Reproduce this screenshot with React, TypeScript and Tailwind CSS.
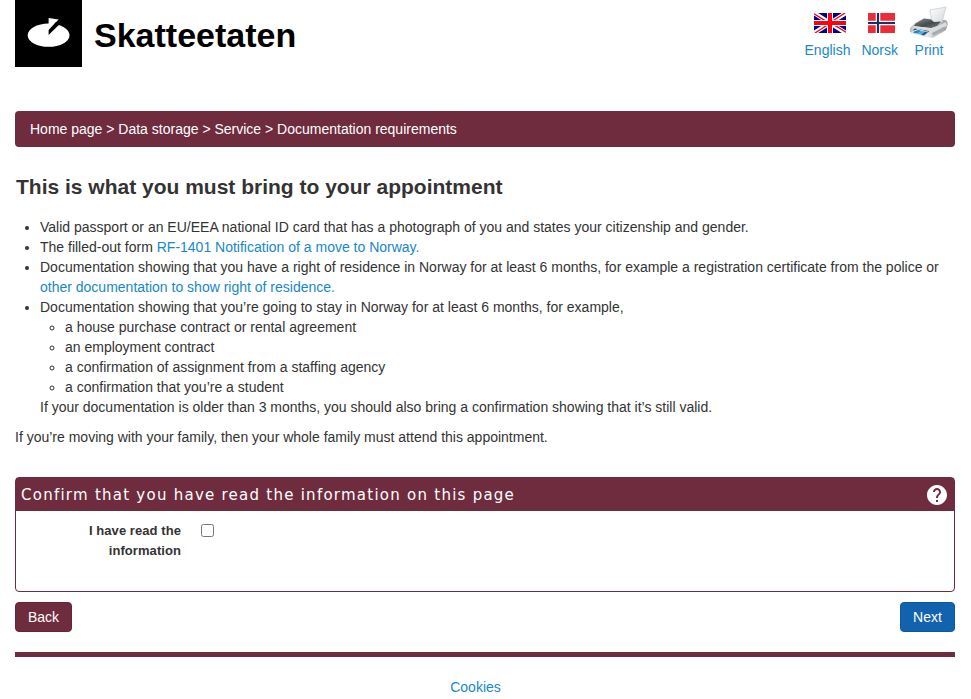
import { useState, type ReactNode } from "react";

const breadcrumbs = ["Home page", "Data storage", "Service", "Documentation requirements"];

const stayExamples = [
  "a house purchase contract or rental agreement",
  "an employment contract",
  "a confirmation of assignment from a staffing agency",
  "a confirmation that you’re a student",
];

function Link({ children }: { children: ReactNode }) {
  return (
    <a href="#" className="text-[#1788c8] hover:underline">
      {children}
    </a>
  );
}

function Logo() {
  return (
    <div className="flex">
      <svg width="67" height="67" viewBox="0 0 67 67">
        <rect width="67" height="67" fill="#000" />
        <ellipse cx="33.6" cy="35.2" rx="20.9" ry="11.6" fill="#fff" />
        <path d="M33.6 18L43.6 19.4L33.6 30Z" fill="#fff" />
        <path d="M33.6 35V30L41 22L43.8 25Z" fill="#000" />
      </svg>
      <span className="ml-3 mt-[9px] text-[34px] leading-[52px] font-bold text-black">Skatteetaten</span>
    </div>
  );
}

function EnglishFlag() {
  return (
    <svg className="ml-[5px]" width="32" height="20" viewBox="0 0 32 20">
      <rect width="32" height="20" fill="#000080" />
      <path d="M0 0L32 20M32 0L0 20" stroke="#fff" strokeWidth="4.4" />
      <path d="M0 0.7L14 9.4M32 19.3L18 10.6M31 0L17 9M1 20L15 11" stroke="#f00010" strokeWidth="1.3" />
      <path d="M16 0V20M0 10H32" stroke="#fff" strokeWidth="6" />
      <path d="M16 0V20M0 10H32" stroke="#ff0010" strokeWidth="4" />
    </svg>
  );
}

function NorwegianFlag() {
  return (
    <svg className="ml-[3px]" width="27" height="20" viewBox="0 0 27 20">
      <rect width="27" height="20" fill="#ee2c38" />
      <path d="M10 0V20M0 10H27" stroke="#fff" strokeWidth="4.6" />
      <path d="M10 0V20M0 10H27" stroke="#123564" strokeWidth="2.2" />
    </svg>
  );
}

function PrinterIcon() {
  return (
    <svg width="40" height="34" viewBox="0 0 40 34">
      <defs>
        <linearGradient id="paper" x1="0" y1="0" x2="1" y2="1">
          <stop offset="0" stopColor="#fff" />
          <stop offset="1" stopColor="#d3d6da" />
        </linearGradient>
        <linearGradient id="lid" x1="0" y1="0" x2="1" y2="1">
          <stop offset="0" stopColor="#8b9092" />
          <stop offset="0.55" stopColor="#454b4d" />
          <stop offset="1" stopColor="#777c7d" />
        </linearGradient>
        <linearGradient id="body" x1="0" y1="0" x2="1" y2="0">
          <stop offset="0" stopColor="#b9bdbf" />
          <stop offset="0.45" stopColor="#eceeee" />
          <stop offset="1" stopColor="#95999b" />
        </linearGradient>
      </defs>
      <path d="M6 17L15 12L36 14Q39 15 38.5 19L37 24L24 32L17 31L1 26Q0 22 3 20Z" fill="url(#body)" />
      <path d="M21 4L37 1L33 16L25 17L22.5 14Z" fill="url(#paper)" stroke="#c4c8cc" strokeWidth="0.7" />
      <path d="M6.5 17.5L15 12.5L22 13.5L25 16L32 15.5L28 20L22 22L5 20Z" fill="url(#lid)" />
      <path d="M5 20L22 22.5L29 20L37 16L38 20L28 25L23 27L3 23Z" fill="#d9dcdd" />
      <path d="M5.5 22.5L20 25L20 26.5L4 24.5Z" fill="#344c5d" />
      <path d="M4 25L9 23L20.5 26L15.5 30.5L1.5 27.5Z" fill="#d6e8f5" />
      <path d="M5.5 25.3L9.5 24L12 24.7L8.5 27.5L4 26.7Z" fill="#2580c7" />
      <path d="M12 24.8L15 25.5L11.8 28.5L8.7 27.7Z" fill="#48afc6" />
      <path d="M15.5 25.5L19 26.3L15 29.6L12 28.8Z" fill="#2b55a5" />
      <path d="M28 24.5L35.5 20.5V23L24 30L23 27Z" fill="#a5aaac" />
    </svg>
  );
}

function HelpIcon() {
  return (
    <svg width="20" height="20" viewBox="2 2 20 20" fill="#fff">
      <path d="M12 2C6.48 2 2 6.48 2 12s4.48 10 10 10 10-4.48 10-10S17.52 2 12 2zm1 17h-2v-2h2v2zm2.07-7.75l-.9.92C13.45 12.9 13 13.5 13 15h-2v-.5c0-1.1.45-2.1 1.17-2.83l1.24-1.26c.37-.36.59-.86.59-1.41 0-1.1-.9-2-2-2s-2 .9-2 2H8c0-2.21 1.79-4 4-4s4 1.79 4 4c0 .88-.36 1.68-.93 2.25z" />
    </svg>
  );
}

function HeaderLink({ icon, label }: { icon: ReactNode; label: string }) {
  return (
    <a href="#" className="flex flex-col items-center text-[#1788c8]">
      <span className="flex h-10 items-center justify-center pt-[6px]">{icon}</span>
      <span>{label}</span>
    </a>
  );
}

export default function App() {
  const [confirmed, setConfirmed] = useState(false);

  return (
    <div className="h-[699px] overflow-hidden bg-white pr-4 pl-[15px] font-['Liberation_Sans',Arial,sans-serif] text-[14px] leading-5 text-[#333]">
      <header className="flex h-[111px] items-start justify-between">
        <Logo />
        <nav className="flex gap-[11px] pr-[6px]">
          <HeaderLink icon={<EnglishFlag />} label="English" />
          <HeaderLink icon={<NorwegianFlag />} label="Norsk" />
          <HeaderLink icon={<PrinterIcon />} label="Print" />
        </nav>
      </header>

      <div className="flex h-9 items-center rounded bg-[#6f2c3f] px-[15px] text-white">
        {breadcrumbs.join(" > ")}
      </div>

      <main>
        <h1 className="mt-[27px] pl-px text-[21px] leading-[26px] font-bold">
          This is what you must bring to your appointment
        </h1>

        <ul className="mt-[17px] list-disc pl-[25px]">
          <li>
            Valid passport or an EU/EEA national ID card that has a photograph of you and states your citizenship and
            gender.
          </li>
          <li>
            The filled-out form <Link>RF-1401 Notification of a move to Norway.</Link>
          </li>
          <li>
            Documentation showing that you have a right of residence in Norway for at least 6 months, for example a
            registration certificate from the police or <Link>other documentation to show right of residence.</Link>
          </li>
          <li>
            Documentation showing that you’re going to stay in Norway for at least 6 months, for example,
            <ul className="list-[circle] pl-[25px]">
              {stayExamples.map((example) => (
                <li key={example}>{example}</li>
              ))}
            </ul>
            If your documentation is older than 3 months, you should also bring a confirmation showing that it’s still
            valid.
          </li>
        </ul>

        <p className="mt-[10px]">If you’re moving with your family, then your whole family must attend this appointment.</p>

        <section className="mt-[30px] h-[115px] rounded border border-[#6f2c3f]">
          <div className="flex h-[33px] items-center justify-between bg-[#6f2c3f] pr-[7px] pl-[5px] text-white">
            <h2 className="font-['DejaVu_Sans',Verdana,sans-serif] text-[15px] tracking-[1.25px]">
              Confirm that you have read the information on this page
            </h2>
            <HelpIcon />
          </div>
          <label className="flex pt-[10px]">
            <span className="w-[165px] pl-[65px] text-right text-[13px] font-bold tracking-[0.07px]">
              I have read the information
            </span>
            <input
              type="checkbox"
              className="mt-[3px] ml-5 size-[13px]"
              checked={confirmed}
              onChange={(e) => setConfirmed(e.target.checked)}
            />
          </label>
        </section>

        <div className="mt-[10px] flex justify-between text-white">
          <button className="h-[30px] w-[57px] rounded border border-[#642537] bg-[#6f2c3f]">Back</button>
          <button className="h-[30px] w-[55px] rounded border border-[#0d58a3] bg-[#1362ae]">Next</button>
        </div>
      </main>

      <footer className="mt-5 border-t-[5px] border-[#6f2c3f] pt-5 pr-[19px] text-center">
        <Link>Cookies</Link>
      </footer>
    </div>
  );
}
